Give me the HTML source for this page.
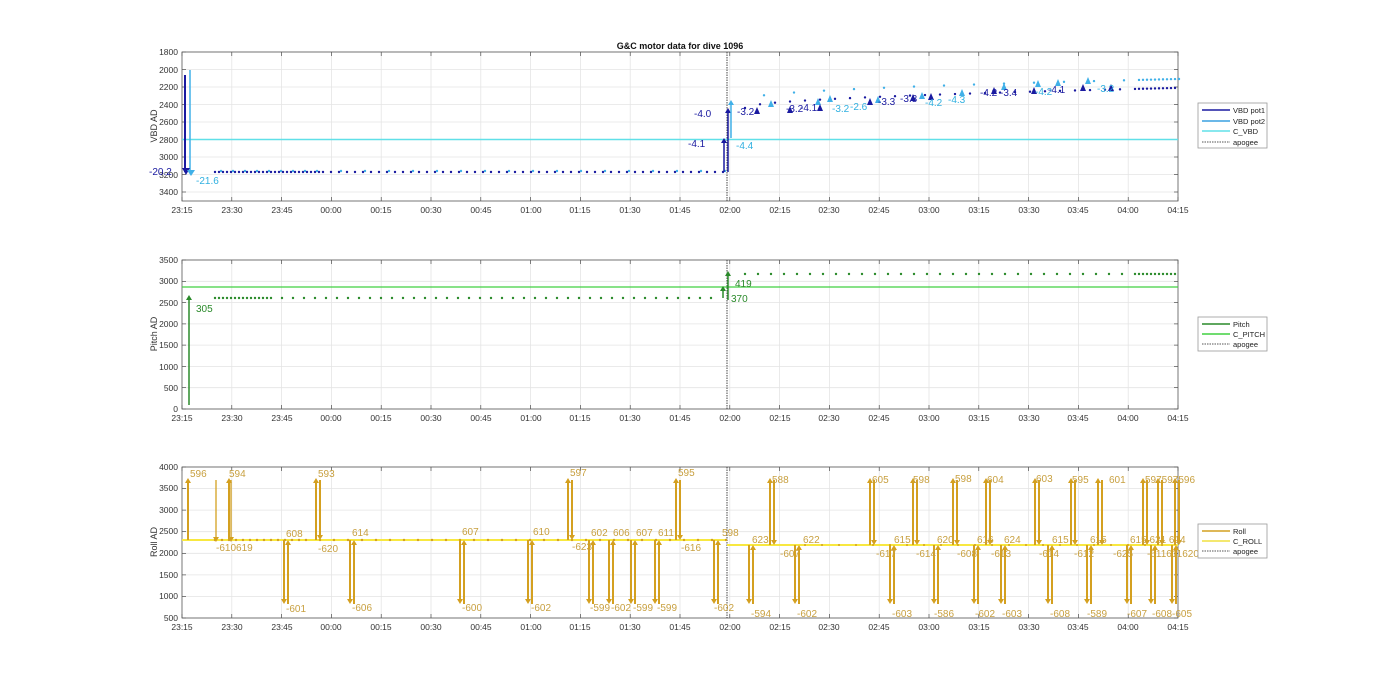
<!DOCTYPE html><html><head><meta charset="utf-8"><style>body{margin:0;background:#fff}svg{display:block;font-family:"Liberation Sans",sans-serif}</style></head><body>
<svg id="s" width="1400" height="693" viewBox="0 0 1400 693">
<rect width="1400" height="693" fill="#fff"/>
<g id="grid"></g>
<g id="data"></g>
<text x="680" y="49" font-size="9" font-weight="bold" text-anchor="middle" fill="#111">G&amp;C motor data for dive 1096</text>
<g font-size="8.5" fill="#333" text-anchor="end">
<text x="178" y="55">1800</text><text x="178" y="73">2000</text><text x="178" y="90">2200</text><text x="178" y="108">2400</text><text x="178" y="125">2600</text><text x="178" y="143">2800</text><text x="178" y="160">3000</text><text x="178" y="178">3200</text><text x="178" y="195">3400</text>
<text x="178" y="263">3500</text><text x="178" y="284">3000</text><text x="178" y="306">2500</text><text x="178" y="327">2000</text><text x="178" y="348">1500</text><text x="178" y="370">1000</text><text x="178" y="391">500</text><text x="178" y="412">0</text>
<text x="178" y="470">4000</text><text x="178" y="491">3500</text><text x="178" y="513">3000</text><text x="178" y="534">2500</text><text x="178" y="556">2000</text><text x="178" y="578">1500</text><text x="178" y="599">1000</text><text x="178" y="621">500</text>
</g>
<g font-size="9" fill="#333" text-anchor="middle" transform="rotate(-90)">
<text x="-126" y="157">VBD AD</text><text x="-334" y="157">Pitch AD</text><text x="-542" y="157">Roll AD</text>
</g>
<g id="xl" font-size="8.5" fill="#333" text-anchor="middle">
<text x="182" y="213">23:15</text><text x="232" y="213">23:30</text><text x="282" y="213">23:45</text><text x="331" y="213">00:00</text><text x="381" y="213">00:15</text><text x="431" y="213">00:30</text><text x="481" y="213">00:45</text><text x="531" y="213">01:00</text><text x="580" y="213">01:15</text><text x="630" y="213">01:30</text><text x="680" y="213">01:45</text><text x="730" y="213">02:00</text><text x="780" y="213">02:15</text><text x="829" y="213">02:30</text><text x="879" y="213">02:45</text><text x="929" y="213">03:00</text><text x="979" y="213">03:15</text><text x="1029" y="213">03:30</text><text x="1078" y="213">03:45</text><text x="1128" y="213">04:00</text><text x="1178" y="213">04:15</text>
</g>
<g font-size="8.5" fill="#333" text-anchor="middle">
<text x="182" y="421">23:15</text><text x="232" y="421">23:30</text><text x="282" y="421">23:45</text><text x="331" y="421">00:00</text><text x="381" y="421">00:15</text><text x="431" y="421">00:30</text><text x="481" y="421">00:45</text><text x="531" y="421">01:00</text><text x="580" y="421">01:15</text><text x="630" y="421">01:30</text><text x="680" y="421">01:45</text><text x="730" y="421">02:00</text><text x="780" y="421">02:15</text><text x="829" y="421">02:30</text><text x="879" y="421">02:45</text><text x="929" y="421">03:00</text><text x="979" y="421">03:15</text><text x="1029" y="421">03:30</text><text x="1078" y="421">03:45</text><text x="1128" y="421">04:00</text><text x="1178" y="421">04:15</text>
<text x="182" y="630">23:15</text><text x="232" y="630">23:30</text><text x="282" y="630">23:45</text><text x="331" y="630">00:00</text><text x="381" y="630">00:15</text><text x="431" y="630">00:30</text><text x="481" y="630">00:45</text><text x="531" y="630">01:00</text><text x="580" y="630">01:15</text><text x="630" y="630">01:30</text><text x="680" y="630">01:45</text><text x="730" y="630">02:00</text><text x="780" y="630">02:15</text><text x="829" y="630">02:30</text><text x="879" y="630">02:45</text><text x="929" y="630">03:00</text><text x="979" y="630">03:15</text><text x="1029" y="630">03:30</text><text x="1078" y="630">03:45</text><text x="1128" y="630">04:00</text><text x="1178" y="630">04:15</text>
</g>
<g font-size="10">
<text x="149" y="175" fill="#1a1aa0">-20.2</text><text x="196" y="184" fill="#30b0e0">-21.6</text>
<text x="694" y="117" fill="#1a1aa0">-4.0</text><text x="688" y="147" fill="#1a1aa0">-4.1</text><text x="736" y="149" fill="#30b0e0">-4.4</text>
<text x="737" y="115" fill="#1a1aa0">-3.2</text><text x="786" y="112" fill="#1a1aa0">-3.2</text><text x="800" y="111" fill="#1a1aa0">-4.1</text><text x="832" y="112" fill="#30b0e0">-3.2</text><text x="850" y="110" fill="#30b0e0">-2.6</text><text x="878" y="105" fill="#1a1aa0">-3.3</text><text x="900" y="102" fill="#1a1aa0">-3.3</text><text x="925" y="106" fill="#30b0e0">-4.2</text><text x="948" y="103" fill="#30b0e0">-4.3</text><text x="980" y="96" fill="#1a1aa0">-4.2</text><text x="1000" y="96" fill="#1a1aa0">-3.4</text><text x="1035" y="95" fill="#30b0e0">-4.2</text><text x="1048" y="93" fill="#1a1aa0">-4.1</text><text x="1097" y="92" fill="#30b0e0">-3.2</text>
</g>
<g font-size="10" fill="#2a8a2a"><text x="196" y="312">305</text><text x="731" y="302">370</text><text x="735" y="287">419</text></g>
<g font-size="10" fill="#c8a040">
<text x="190" y="477">596</text><text x="229" y="477">594</text><text x="318" y="477">593</text><text x="570" y="476">597</text><text x="678" y="476">595</text><text x="772" y="483">588</text><text x="872" y="483">605</text><text x="913" y="483">598</text><text x="955" y="482">598</text><text x="987" y="483">604</text><text x="1036" y="482">603</text><text x="1072" y="483">595</text><text x="1109" y="483">601</text><text x="1145" y="483">597597596</text>
<text x="216" y="551">-610619</text><text x="318" y="552">-620</text><text x="286" y="537">608</text><text x="352" y="536">614</text><text x="462" y="535">607</text><text x="533" y="535">610</text><text x="591" y="536">602</text><text x="613" y="536">606</text><text x="636" y="536">607</text><text x="658" y="536">611</text><text x="722" y="536">598</text><text x="572" y="550">-623</text><text x="681" y="551">-616</text><text x="752" y="543">623</text><text x="803" y="543">622</text><text x="780" y="557">-607</text><text x="876" y="557">-617</text><text x="894" y="543">615</text><text x="916" y="557">-614</text><text x="937" y="543">620</text><text x="957" y="557">-608</text><text x="977" y="543">616</text><text x="991" y="557">-613</text><text x="1004" y="543">624</text><text x="1039" y="557">-614</text><text x="1052" y="543">615</text><text x="1074" y="557">-612</text><text x="1090" y="543">615</text><text x="1113" y="557">-625</text><text x="1130" y="543">615 621 614</text><text x="1147" y="557">-611611620</text>
<text x="286" y="612">-601</text><text x="352" y="611">-606</text><text x="462" y="611">-600</text><text x="531" y="611">-602</text><text x="590" y="611">-599</text><text x="611" y="611">-602</text><text x="633" y="611">-599</text><text x="657" y="611">-599</text><text x="714" y="611">-602</text><text x="751" y="617">-594</text><text x="797" y="617">-602</text><text x="892" y="617">-603</text><text x="934" y="617">-586</text><text x="975" y="617">-602</text><text x="1002" y="617">-603</text><text x="1050" y="617">-608</text><text x="1087" y="617">-589</text><text x="1127" y="617">-607</text><text x="1152" y="617">-608-605</text>
</g>
<g font-size="7.5" fill="#222">
<rect x="1198" y="103" width="69" height="45" fill="#fff" stroke="#999" stroke-width=".8"/>
<line x1="1202" y1="110" x2="1230" y2="110" stroke="#1a1aa0" stroke-width="1.5"/><text x="1233" y="113">VBD pot1</text>
<line x1="1202" y1="121" x2="1230" y2="121" stroke="#3aa0e0" stroke-width="1.5"/><text x="1233" y="124">VBD pot2</text>
<line x1="1202" y1="131" x2="1230" y2="131" stroke="#60e0e8" stroke-width="1.5"/><text x="1233" y="134">C_VBD</text>
<line x1="1202" y1="142" x2="1230" y2="142" stroke="#555" stroke-dasharray="1.5 1"/><text x="1233" y="145">apogee</text>
<rect x="1198" y="317" width="69" height="34" fill="#fff" stroke="#999" stroke-width=".8"/>
<line x1="1202" y1="324" x2="1230" y2="324" stroke="#2a8a2a" stroke-width="1.5"/><text x="1233" y="327">Pitch</text>
<line x1="1202" y1="334" x2="1230" y2="334" stroke="#40d040" stroke-width="1.5"/><text x="1233" y="337">C_PITCH</text>
<line x1="1202" y1="344" x2="1230" y2="344" stroke="#555" stroke-dasharray="1.5 1"/><text x="1233" y="347">apogee</text>
<rect x="1198" y="524" width="69" height="34" fill="#fff" stroke="#999" stroke-width=".8"/>
<line x1="1202" y1="531" x2="1230" y2="531" stroke="#d4a020" stroke-width="1.5"/><text x="1233" y="534">Roll</text>
<line x1="1202" y1="541" x2="1230" y2="541" stroke="#f0e040" stroke-width="1.5"/><text x="1233" y="544">C_ROLL</text>
<line x1="1202" y1="551" x2="1230" y2="551" stroke="#555" stroke-dasharray="1.5 1"/><text x="1233" y="554">apogee</text>
</g>
</svg>
<script>
var NS="http://www.w3.org/2000/svg",G=document.getElementById('grid'),D=document.getElementById('data');
function el(p,t,a){var e=document.createElementNS(NS,t);for(var k in a)e.setAttribute(k,a[k]);p.appendChild(e);return e}
function ln(p,x1,y1,x2,y2,c,w,da){var a={x1:x1,y1:y1,x2:x2,y2:y2,stroke:c,'stroke-width':w||1};if(da)a['stroke-dasharray']=da;return el(p,'line',a)}
var axes=[[52,201,[52,69.5,87,104.5,122,139.5,157,174.5,192]],[260,409,[260,281.3,302.6,323.9,345.1,366.4,387.7,409]],[467,618,[467,488.6,510.1,531.7,553.3,574.9,596.4,618]]];
axes.forEach(function(a){
 el(G,'rect',{x:182,y:a[0],width:996,height:a[1]-a[0],fill:'#fff'});
 for(var i=1;i<20;i++){var x=182+i*49.8;ln(G,x,a[0],x,a[1],'#e4e4e4',.8)}
 a[2].forEach(function(y){ln(G,182,y,1178,y,'#e4e4e4',.8);ln(G,182,y,186,y,'#333',.6);ln(G,1178,y,1174,y,'#333',.6)});
 for(var i=0;i<=20;i++){var x=182+i*49.8;ln(G,x,a[1],x,a[1]-4,'#333',.6);ln(G,x,a[0],x,a[0]+4,'#333',.6)}
 el(G,'rect',{x:182,y:a[0],width:996,height:a[1]-a[0],fill:'none',stroke:'#555','stroke-width':.8});
 ln(D,727,a[0],727,a[1],'#444',1,'1.5 1');
});
function dot(x,y,c,r){el(D,'circle',{cx:x,cy:y,r:r||1.2,fill:c})}
function arr(x,y1,y2,c,w){ln(D,x,y1,x,y2+(y2<y1?4:-4),c,w||1.5);var d=y2<y1?5:-5;el(D,'polygon',{points:(x-3)+','+(y2+d)+' '+(x+3)+','+(y2+d)+' '+x+','+y2,fill:c})}
ln(D,182,139.5,1178,139.5,'#60e0e8',1.5);
for(var x=215;x<724;x+=x<320?4:8){dot(x,172,'#1a1aa0');if(x%3==0)dot(x+2,171,'#40b0e8')}
for(var x=745;x<1176;x+=x<1130?15:4){var t=(x-745)/430,y=108-20*Math.sqrt(t);dot(x,y,'#1a1aa0');if((x/15|0)%2==0||x>1130)dot(x+4,y-9,'#40b0e8')}
ln(D,185,75,185,172,'#1a1aa0',2);ln(D,190,70,190,172,'#40b0e8',1.5);
el(D,'polygon',{points:'182,168 190,168 186,175',fill:'#1a1aa0'});el(D,'polygon',{points:'187,170 195,170 191,176',fill:'#40b0e8'});
arr(724,172,138,'#1a1aa0');arr(728,172,108,'#1a1aa0');arr(731,138,100,'#40b0e8');
[[771,103],[818,101],[830,98],[878,99],[922,95],[962,92],[1004,86],[1038,83],[1058,82],[1088,80]].forEach(function(p){el(D,'polygon',{points:(p[0]-3)+','+(p[1]+4)+' '+(p[0]+3)+','+(p[1]+4)+' '+p[0]+','+(p[1]-3),fill:'#40b0e8'})});
[[757,110],[790,109],[820,107],[870,101],[913,97],[931,96],[994,90],[1034,90],[1083,87],[1111,87]].forEach(function(p){el(D,'polygon',{points:(p[0]-3)+','+(p[1]+4)+' '+(p[0]+3)+','+(p[1]+4)+' '+p[0]+','+(p[1]-3),fill:'#1a1aa0'})});
ln(D,182,287,1178,287,'#40d040',1.2);
for(var x=215;x<720;x+=x<270?4:11)dot(x,298,'#2a8a2a');
for(var x=745;x<1176;x+=x<1130?13:4)dot(x,274,'#2a8a2a');
arr(189,405,295,'#2a8a2a');arr(723,298,286,'#2a8a2a');arr(728,300,271,'#2a8a2a');
var C='#d4a020';
ln(D,182,540,727,540,'#f8e840',2);ln(D,727,545,1178,545,'#f8e840',2);
for(var x=215;x<727;x+=x<300?7:14)dot(x,540,C);
for(var x=805;x<1176;x+=17)dot(x,545,C,1);
arr(188,540,478,C,2);arr(216,480,542,C,1.3);arr(229,540,478,C,2);arr(231,480,542,C,1.3);
[318,570,678,772,872,915,955,988,1037,1073,1100,1145,1160,1177].forEach(function(x){var b=x>727?545:540;arr(x-2,b,478,C,2);arr(x+2,480,b,C,2)});
[286,352,462,530,591,611,633,657,716,751,797,892,936,976,1003,1050,1089,1129,1153,1174].forEach(function(x){var b=x>727?545:540;arr(x-2,b,604,C,2);arr(x+2,604,b,C,2)});
</script>
</body></html>
